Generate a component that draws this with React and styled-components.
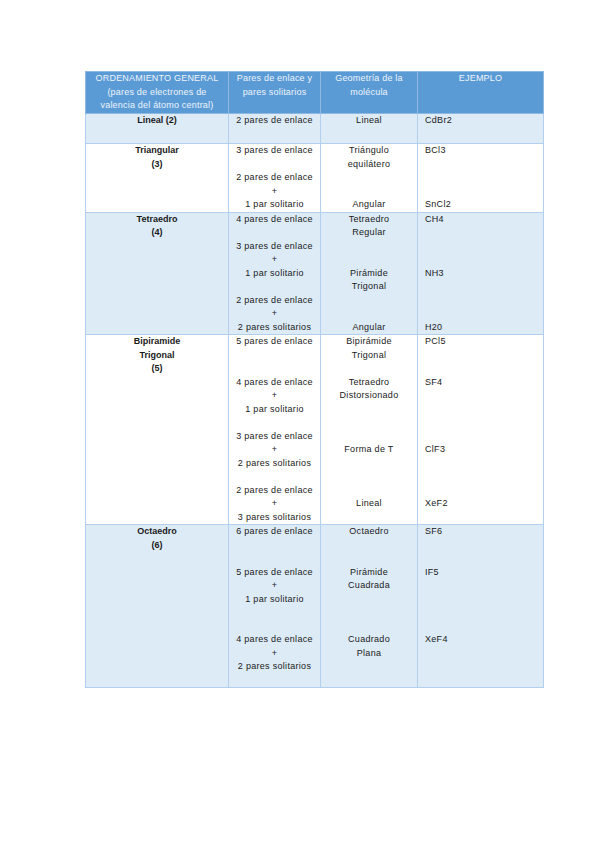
import React from "react";
import styled, { createGlobalStyle } from "styled-components";

const Global = createGlobalStyle`
  html, body { margin: 0; padding: 0; background: #ffffff; }
  body { font-family: "Liberation Sans", Arial, sans-serif; }
`;

const Page = styled.div`
  width: 599px;
  height: 848px;
  padding: 71px 0 0 85px;
  box-sizing: border-box;
  background: #ffffff;
`;

const Table = styled.table`
  border-collapse: collapse;
  table-layout: fixed;
  width: 458px;
  font-size: 9px;
  color: #1a1a1a;
`;

const Col = styled.col`
  width: ${(p) => p.$w}px;
`;

const HeadRow = styled.tr`
  height: 42px;
  background: #5b9bd5;
`;

const HeadCell = styled.th`
  border: 1px solid #8fb8e3;
  padding: 0 2px;
  vertical-align: top;
  font-weight: normal;
  color: #eef4fb;
  text-align: center;
  line-height: 13.6px;
  letter-spacing: 0.2px;
  white-space: nowrap;
`;

const BodyRow = styled.tr`
  height: ${(p) => p.$h}px;
  background: ${(p) => (p.$shade ? "#ddebf7" : "#ffffff")};
`;

const Cell = styled.td`
  border: 1px solid #b3cfee;
  padding: 0;
  padding-left: ${(p) => (p.$left ? "7px" : "0")};
  vertical-align: top;
  text-align: ${(p) => (p.$left ? "left" : "center")};
  font-weight: ${(p) => (p.$bold ? "bold" : "normal")};
  letter-spacing: ${(p) => (p.$bold ? "0" : "0.3px")};
  white-space: nowrap;
`;

const Line = styled.div`
  height: 13.5px;
  line-height: 13.5px;
`;

const rows = [
  {
    h: 30,
    shade: true,
    c: [["Lineal (2)"], ["2 pares de enlace"], ["Lineal"], ["CdBr2"]],
  },
  {
    h: 68,
    shade: false,
    c: [
      ["Triangular", "(3)"],
      ["3 pares de enlace", "", "2 pares de enlace", "+", "1 par solitario"],
      ["Triángulo", "equilátero", "", "", "Angular"],
      ["BCl3", "", "", "", "SnCl2"],
    ],
  },
  {
    h: 122,
    shade: true,
    c: [
      ["Tetraedro", "(4)"],
      [
        "4 pares de enlace",
        "",
        "3 pares de enlace",
        "+",
        "1 par solitario",
        "",
        "2 pares de enlace",
        "+",
        "2 pares solitarios",
      ],
      ["Tetraedro", "Regular", "", "", "Pirámide", "Trigonal", "", "", "Angular"],
      ["CH4", "", "", "", "NH3", "", "", "", "H20"],
    ],
  },
  {
    h: 190,
    shade: false,
    c: [
      ["Bipiramide", "Trigonal", "(5)"],
      [
        "5 pares de enlace",
        "",
        "",
        "4 pares de enlace",
        "+",
        "1 par solitario",
        "",
        "3 pares de enlace",
        "+",
        "2 pares solitarios",
        "",
        "2 pares de enlace",
        "+",
        "3 pares solitarios",
      ],
      [
        "Bipirámide",
        "Trigonal",
        "",
        "Tetraedro",
        "Distorsionado",
        "",
        "",
        "",
        "Forma de T",
        "",
        "",
        "",
        "Lineal",
      ],
      ["PCl5", "", "", "SF4", "", "", "", "", "ClF3", "", "", "", "XeF2"],
    ],
  },
  {
    h: 163,
    shade: true,
    c: [
      ["Octaedro", "(6)"],
      [
        "6 pares de enlace",
        "",
        "",
        "5 pares de enlace",
        "+",
        "1 par solitario",
        "",
        "",
        "4 pares de enlace",
        "+",
        "2 pares solitarios",
      ],
      ["Octaedro", "", "", "Pirámide", "Cuadrada", "", "", "", "Cuadrado", "Plana"],
      ["SF6", "", "", "IF5", "", "", "", "", "XeF4"],
    ],
  },
];

const Lines = ({ items }) =>
  items.map((t, i) => <Line key={i}>{t || "\u00a0"}</Line>);

export default function App() {
  return (
    <>
      <Global />
      <Page>
        <Table>
          <colgroup>
            <Col $w={143} />
            <Col $w={92} />
            <Col $w={97} />
            <Col $w={126} />
          </colgroup>
          <thead>
            <HeadRow>
              <HeadCell>
                ORDENAMIENTO GENERAL
                <br />
                (pares de electrones de
                <br />
                valencia del átomo central)
              </HeadCell>
              <HeadCell>
                Pares de enlace y
                <br />
                pares solitarios
              </HeadCell>
              <HeadCell>
                Geometría de la
                <br />
                molécula
              </HeadCell>
              <HeadCell>EJEMPLO</HeadCell>
            </HeadRow>
          </thead>
          <tbody>
            {rows.map((r, i) => (
              <BodyRow key={i} $h={r.h} $shade={r.shade}>
                <Cell $bold>
                  <Lines items={r.c[0]} />
                </Cell>
                <Cell>
                  <Lines items={r.c[1]} />
                </Cell>
                <Cell>
                  <Lines items={r.c[2]} />
                </Cell>
                <Cell $left>
                  <Lines items={r.c[3]} />
                </Cell>
              </BodyRow>
            ))}
          </tbody>
        </Table>
      </Page>
    </>
  );
}
